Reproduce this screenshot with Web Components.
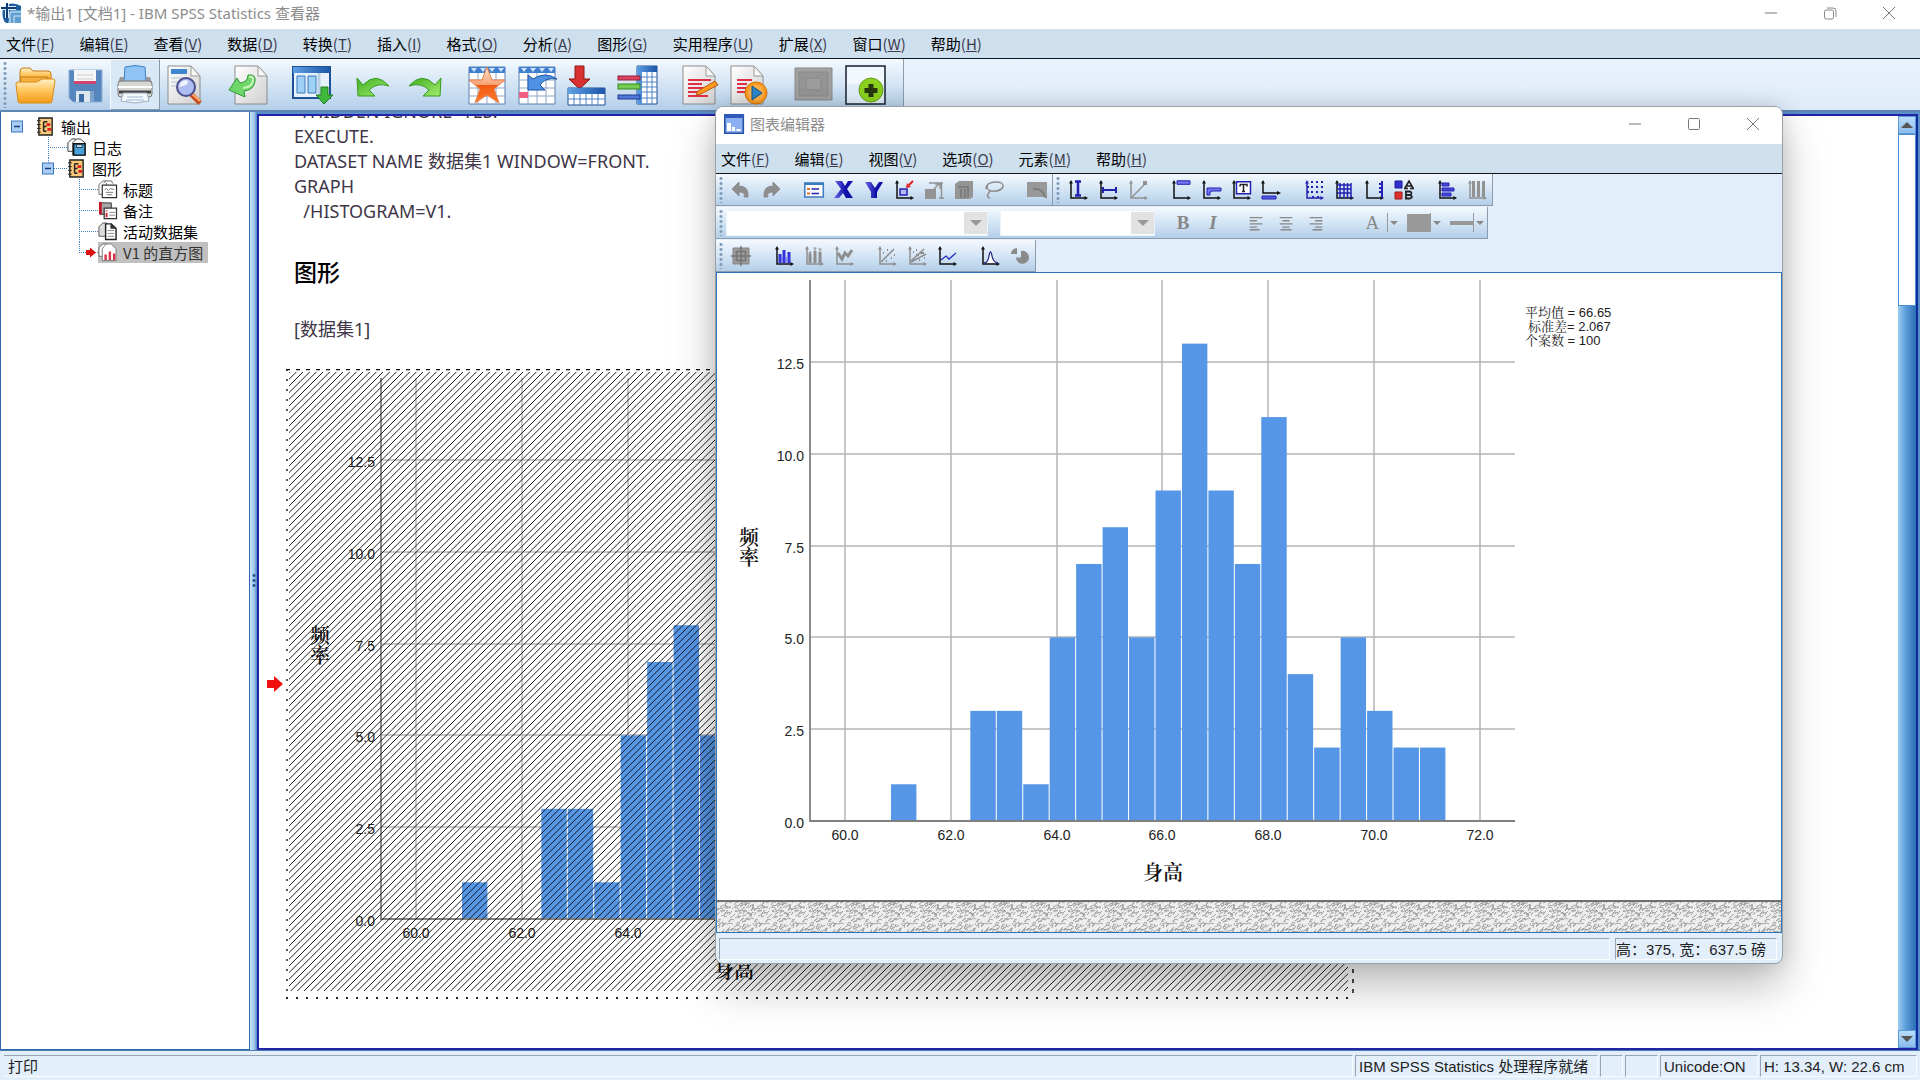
<!DOCTYPE html>
<html lang="zh-CN">
<head>
<meta charset="utf-8">
<title>*输出1 [文档1] - IBM SPSS Statistics 查看器</title>
<style>
html,body{margin:0;height:100%;overflow:hidden}
body{font-family:"Noto Sans CJK SC",sans-serif;font-size:15px;color:#000;background:#e2effb}
</style>
</head>
<body>
<spss-viewer></spss-viewer>
<script>
/* ---------- icon artwork ---------- */
const DEFS = `<defs>
<linearGradient id="or" x1="0" y1="0" x2="0" y2="1"><stop offset="0" stop-color="#fff2c8"/><stop offset=".5" stop-color="#ffc45a"/><stop offset="1" stop-color="#f39a16"/></linearGradient>
<linearGradient id="gn" x1="0" y1="0" x2="1" y2="1"><stop offset="0" stop-color="#3fae20"/><stop offset="1" stop-color="#a5ec70"/></linearGradient>
<linearGradient id="bl" x1="0" y1="0" x2="1" y2="0"><stop offset="0" stop-color="#5fa0e4"/><stop offset="1" stop-color="#1b55a8"/></linearGradient>
<linearGradient id="pg" x1="0" y1="0" x2="1" y2="1"><stop offset="0" stop-color="#fff"/><stop offset="1" stop-color="#cfcfcf"/></linearGradient>
<linearGradient id="st" x1="0" y1="0" x2="0" y2="1"><stop offset="0" stop-color="#ffe4d0"/><stop offset=".5" stop-color="#f8a070"/><stop offset=".51" stop-color="#f05a10"/><stop offset="1" stop-color="#ff7a30"/></linearGradient>
<linearGradient id="in" x1="0" y1="0" x2="1" y2="0"><stop offset="0" stop-color="#6c6ce8"/><stop offset=".6" stop-color="#1010a8"/></linearGradient></defs>`;
const PAGE = '<path d="M3 1h23l9 10v28H3z" fill="url(#pg)" stroke="#8c8c8c"/><path d="M26 1v10h9z" fill="#f8f8f8" stroke="#999"/>';
const GRID = '<path d="M2 2h36v37H2z" fill="#fff" stroke="#5b7fae"/><path d="M2 2h36v6H2z" fill="#3f7fd0"/><path d="M4 3l3 4 3-4M13 3l3 4 3-4M22 3l3 4 3-4M31 3l3 4 3-4" fill="#cfe4fb"/><path d="M2 15h36M2 23h36M2 31h36M11 8v31M20 8v31M29 8v31" stroke="#8ea4c4" fill="none"/>';
const AX = (c='#111') => `<path d="M3 2v16h15" fill="none" stroke="${c}" stroke-width="1.5"/><path d="M1 3.500L3 0l2 3.500zM16.500 16L20 18l-3.500 2z" fill="${c}"/>`;
const ICONS = {
open:'<path d="M5 7q0-4 3-4h7l3 3h15q3 0 3 3v8H5z" fill="url(#or)" stroke="#c67a10"/><path d="M4 34l2-22h27v22z" fill="#f5b040" stroke="#c67a10"/><path d="M1 19q0-2 2-2h19l5-3h11q2 0 2 2l-3 20q0 2-2 2H5q-2 0-2-2z" fill="url(#or)" stroke="#d98b18"/>',
save:'<path d="M4 5h33v32H8l-4-4z" fill="#5686bd" stroke="#8eb0d8"/><path d="M9 5h22v14H9z" fill="#f6f6f8"/><path d="M12 10h16M12 14h16" stroke="#ccc"/><path d="M9 16h22v3H9z" fill="#d2456a"/><path d="M11 26h17v11H11z" fill="#dde5ee"/><path d="M14 29h5v8h-5z" fill="#3c6ca6"/><path d="M25 26h4v11h-4z" fill="#7da2cc"/>',
print:'<path d="M10 2q10-3 20 0l1 15H9z" fill="#8fc4f4" stroke="#3c80c8"/><path d="M5 12h4v6h22v-6h4l2 6H3z" fill="#9a9a9a"/><rect x="3" y="16" width="34" height="16" rx="3" fill="#d6d6d2" stroke="#777"/><path d="M3 22h34" stroke="#fff" stroke-width="2"/><path d="M4 27h32" stroke="#444" stroke-width="3"/><path d="M8 28h24l2 8-14 2-14-2z" fill="#f5f9fc" stroke="#9ab"/><path d="M12 32h16M11 35h18" stroke="#9cb8d8"/>',
preview:PAGE+'<path d="M6 4h16v5H6z" fill="#3f86cf"/><path d="M6 13h14M6 17h6M6 21h5" stroke="#b8c4d4"/><path d="M26 29l9 9" stroke="#c8481c" stroke-width="5"/><path d="M26 28l9 8" stroke="#ffb070" stroke-width="2"/><circle cx="21" cy="22" r="9" fill="#aebcf0" stroke="#4a4f8c" stroke-width="2"/><path d="M14 22q1-7 8-7 4 5-8 7z" fill="#eef2ff"/>',
export:'<g transform="translate(4)">'+PAGE+'</g><path d="M20 10q8-1 7 6-1 9-11 10l1 6L1 25l8-12 3 5q8-1 8-8z" fill="#70d66a" stroke="#2c9a34"/><path d="M21 12q5-1 4 4-1 6-10 7" fill="none" stroke="#c8f6bc" stroke-width="2"/>',
goto:'<path d="M2 2h37v31H2z" fill="#e8f2fc" stroke="#1e5296" stroke-width="2"/><path d="M2 2h37v6H2z" fill="url(#bl)"/><path d="M6 11h8v17H6zM17 11h8v17h-8z" fill="#9fd0f6" stroke="#3b78bd"/><path d="M28 8v24" stroke="#b8cfe8" stroke-width="3"/><path d="M30 22h7v8h5l-9 9-8-9h5z" fill="#3eb83a" stroke="#227a22"/>',
undo:'<path d="M3 13l1 18h17l-6-6q8-8 20-4Q22 6 9 20z" fill="url(#gn)" stroke="#379a22"/>',
redo:'<path d="M37 13l-1 18H19l6-6q-8-8-20-4Q18 6 31 20z" fill="url(#gn)" stroke="#379a22"/>',
star:GRID+'<path d="M20 2l5 13h13L27 24l5 14-12-8-12 8 5-14L2 15h13z" fill="url(#st)" stroke="#e8824c"/>',
case:GRID+'<path d="M2 27h9v6H2z" fill="#f06080"/><path d="M11 25V10l5 4q12-8 24 0-12-2-17 6l5 5z" fill="#4f92e4" stroke="#1c55a4"/>',
insert:'<path d="M8 1h9v13h6L12.500 24 2 14h6z" fill="#d93030" stroke="#8c1818"/><path d="M1 23h37v17H1z" fill="#fff" stroke="#1f4f94"/><path d="M1 23h37v6H1z" fill="url(#bl)"/><path d="M1 34h37M7 29v11M13 29v11M19 29v11M25 29v11M31 29v11" stroke="#4d83c8" fill="none"/>',
vars:'<path d="M20 1h20v38H20z" fill="#fff" stroke="#1f4f94"/><path d="M20 1h20v6H20zM20 7h5v32h-5z" fill="url(#bl)"/><path d="M25 12h15M25 17h15M25 22h15M25 27h15M25 33h15M30 7v32M35 7v32" stroke="#4d83c8" fill="none"/><rect x="1" y="11" width="22" height="4" fill="#e04060" stroke="#902038"/><rect x="1" y="19" width="22" height="5" fill="#74cc50" stroke="#358a20"/><rect x="1" y="30" width="22" height="4" fill="#5078d8" stroke="#203c90"/>',
script:PAGE+'<path d="M8 15h23M8 19h14M8 23h20M8 27h12M8 31h20" stroke="#e03048" stroke-width="2"/><path d="M18 26l17-10 3 4-17 9-5 1z" fill="#ff9820" stroke="#b85c08"/>',
runscript:'<g transform="translate(-2)">'+PAGE+'<path d="M9 15h15M9 19h10M9 23h12M9 27h9" stroke="#e03048" stroke-width="2"/><circle cx="28" cy="28" r="11" fill="#fb9a20" stroke="#d07408" stroke-width="1"/><circle cx="28" cy="28" r="8" fill="#f8b04c"/><path d="M24 21l10 7-10 7z" fill="#2f86c8" stroke="#145488"/></g>',
designate:'<path d="M2 3h37v32H2z" fill="#a2a2a2" stroke="#888"/><path d="M6 7h29v24H6z" fill="#959595" stroke="#8a8a8a"/><path d="M13 13h15v12H13z" fill="#9d9d9d" stroke="#888"/>',
add:'<g transform="translate(2)"><path d="M1 1h39v38H1z" fill="#e0eefa" stroke="#182030" stroke-width="1.500"/><path d="M2 2h37v17H2z" fill="#f2f8fd"/><circle cx="26" cy="25" r="12" fill="#8cd020" stroke="#68a018"/><path d="M23.500 19h5v4h4v5h-4v4h-5v-4h-4v-5h4z" fill="#283810"/></g>',
/* 20px set used by the chart editor */
undo2:'<path d="M1 9l7-7v4q10 0 9 11h-4q2-5-5-5v4z" fill="#8e8e8e" stroke="#8e8e8e"/>',
redo2:'<path d="M19 9l-7-7v4Q2 6 3 17h4q-2-5 5-5v4z" fill="#8e8e8e" stroke="#8e8e8e"/>',
props:'<path d="M.8 3h18.500v14H.8z" fill="#fff" stroke="#3a7ac0" stroke-width="1.500"/><path d="M1 3h18v2H1z" fill="#3a7ac0"/><path d="M3 8h3v2H3zM3 12.500h3v2H3z" fill="#e07030"/><path d="M7.500 9H15M7.500 13.500H15" stroke="#2222b0" stroke-width="1.500"/>',
x:'<path d="M1 1h7l3 5 3-5h5l-6 8 6 9h-7l-3-5-4 5H0l7-9z" fill="url(#in)"/>',
y:'<path d="M1 2h6l4 6 4-6h4l-6 10v6H7v-6z" fill="url(#in)"/>',
rescale:AX()+'<path d="M6 9h7v6H6z" fill="#b8b8f8" stroke="#2222b0" stroke-width="1.500"/><path d="M19 1l-4 4" stroke="#e02020" stroke-width="2"/><path d="M12 8l1-5 4 4z" fill="#e02020"/>',
scale2:'<path d="M1 9h11v10H1z" fill="#949494"/><path d="M5 3h14M17.500 3v16M8 11l7-7M11 4h5v5M15 18h5" stroke="#949494" stroke-width="1.500" fill="none"/>',
cube:'<path d="M1 4l4-3h14v16l-3 2H1z" fill="#949494"/><path d="M4 7h10v10M7 9v9M11 9v9" stroke="#777" fill="none" stroke-width="1.500"/>',
lasso:'<path d="M2 9Q2 2 12 2q8 0 7 5-3 5-12 4-6-2-3-6M6 11q-5 6 0 7" fill="none" stroke="#8e8e8e" stroke-width="1.500"/>',
excl:'<path d="M0 2h20v17l-3-2H0z" fill="#989898"/><path d="M6 9h4q6 1 8 8" fill="none" stroke="#7c7c7c" stroke-width="2"/>',
refx:AX()+'<path d="M7 1.500h6M7 15.500h6M10 1v15" stroke="#2222b0" stroke-width="2.500"/>',
refy:AX()+'<path d="M5 7v6M18 7v6M5 10h14" stroke="#2222b0" stroke-width="2"/>',
refeq:AX('#929292')+'<path d="M3 18L17 4" stroke="#929292" stroke-width="1.500"/><path d="M15 1h4v4h-4z" fill="#929292"/>',
title:AX()+'<path d="M6 .8h13v3.500H6z" fill="#7474f0" stroke="#2222b0"/>',
annot:AX()+'<path d="M6 8h14v3h-9l-2 1v3H6z" fill="#7474f0" stroke="#2222b0"/>',
textbox:AX()+'<path d="M5.500 1.800h14v12h-14z" fill="#fff" stroke="#2222b0" stroke-width="1.500"/><path d="M9 4.500h7v2M9 4.500v2M12.500 4.500v7M11 11.500h3" stroke="#222" stroke-width="1.500" fill="none"/>',
footnote:'<path d="M2 2v11h15" fill="none" stroke="#111" stroke-width="1.500"/><path d="M0 3.500L2 0l2 3.500zM16 11l4 2-4 2z" fill="#111"/><path d="M1 16h14v3H1z" fill="#5a5ae0" stroke="#2222b0"/>',
dots:AX('#2222b0')+'<path d="M7 2h2M12 2h2M17 2h2M7 7h2M12 7h2M17 7h2M7 12h2M12 12h2M17 12h2M3 7h2M3 12h2M8 17h2M13 17h2" stroke="#2222b0" stroke-width="2"/>',
grid:AX()+'<path d="M3 5h14M3 9h14M3 13h14M6 3v15M10 3v15M13.500 3v15M17 3v15" stroke="#2222b0" stroke-width="1.500"/>',
axis2:AX()+'<path d="M18 1v17M15 4h3M15 8h3M15 12h3" stroke="#2222b0" stroke-width="2"/>',
legend:'<path d="M1 1h7v7H1z" fill="#3030d0" stroke="#1a1a90"/><path d="M1 12h7v7H1z" fill="#e03030" stroke="#a01818"/><path d="M11 8l4-7 4 7M12.500 6h5M10 8.500h4M16 8.500h4" fill="none" stroke="#222" stroke-width="1.600"/><path d="M12 11v8M11 11.500h5q3 1.500 0 3.500h-4M16 15q4 2 0 3.500h-5" fill="none" stroke="#222" stroke-width="1.800"/>',
transpose:AX()+'<path d="M5 3h7v3H5zM5 8h12v3H5zM5 13h9v3H5z" fill="#4848e0" stroke="#2222b0"/>',
cols:AX('#929292')+'<path d="M5 1h3v16H5zM10 1h3v16h-3zM15 1h3v16h-3z" fill="#929292"/>',
bin:'<path d="M2 2h16v16H2z" fill="#9a9a9a" stroke="#858585"/><path d="M0 10h20M10 0v20M5.500 5.500h9v9h-9z" fill="none" stroke="#757575" stroke-width="1.500"/>',
bars:AX()+'<path d="M6 8v9M10 4v13M15 6v11" stroke="#3434d8" stroke-width="3"/><path d="M8 11v6M12 11v6" stroke="#7777f0" stroke-width="1.500"/>',
ebars:AX('#8e8e8e')+'<path d="M6 8v9M11 5v12M16 6v11" stroke="#8e8e8e" stroke-width="3"/><path d="M4.500 7h3M9.500 2h3M14.500 3h3M6 5v3M11 2v3M16 3v3" stroke="#8e8e8e"/>',
interp:AX('#8e8e8e')+'<path d="M4 7l4 6 3-6 3 3 4-6" fill="none" stroke="#8e8e8e" stroke-width="3"/>',
fit:AX('#8e8e8e')+'<path d="M4 16L17 3" stroke="#8e8e8e" stroke-width="1.500"/><path d="M6 7h1M10 4h1M9 15h1M14 12h1M17 9h1" stroke="#8e8e8e" stroke-width="2"/>',
fitg:AX('#8e8e8e')+'<path d="M4 15L17 3M4 16l15-8" stroke="#8e8e8e" stroke-width="1.500"/><path d="M6 6h1M9 4h1M9 9h3M13 7h4M12 14h1M17 12h1" stroke="#8e8e8e" stroke-width="2"/>',
line:AX()+'<path d="M4 14l5-4 3 3 7-6" fill="none" stroke="#2a2ac0" stroke-width="1.300"/>',
curve:AX()+'<path d="M4 17q4 0 5-7 1.500-8 3 0 1 6 6 7" fill="#fff" stroke="#2a2a90" stroke-width="1.300"/>',
pie:'<path d="M9 4v6.500h-5a6.500 6.500 0 1 0 5-6.500z" fill="#8a8a8a" transform="translate(2 1)"/><path d="M1 8a6 6 0 0 1 6-6v6z" fill="#8a8a8a"/>',
al:'<path d="M3 4h14M3 7.500h8M3 11h14M3 14.500h8M3 17.500h11" stroke="#888" stroke-width="1.500"/>',
ac:'<path d="M3 4h14M6 7.500h8M3 11h14M6 14.500h8M4 17.500h12" stroke="#888" stroke-width="1.500"/>',
ar:'<path d="M3 4h14M9 7.500h8M3 11h14M9 14.500h8M6 17.500h11" stroke="#888" stroke-width="1.500"/>',
swatch:'<path d="M0 1h24v18H0z" fill="#999"/>',
rule:'<path d="M0 10h24" stroke="#999" stroke-width="4"/>',
/* window icons */
app:'<path d="M2 5Q10-3 20 3v17H5Q0 16 2 5z" fill="#1e5c9c"/><path d="M9 7h11v13H7z" fill="#5f9ed0"/><path d="M2 5h13M6 1v14" stroke="#d6ecfa" stroke-width="4"/><path d="M0 5h15M6 0v15" stroke="#123a70" stroke-width="2"/><path d="M9 20V9h11M13 20v-7h7" fill="none" stroke="#d6ecfa" stroke-width="1"/>',
chartwin:'<path d="M.8.800h18.500v18.500H.8z" fill="#8db0f4" stroke="#2450a8" stroke-width="1.600"/><path d="M0 0h20v4H0z" fill="#2c5cb8"/><path d="M3 9h4v8H3zM8 13h3v4H8zM12.500 15h4v2h-4z" fill="#fff"/>',
min:'<path d="M4 10h12" stroke="#777"/>',
max:'<rect x="4.500" y="4.500" width="11" height="11" rx="1" fill="none" stroke="#777"/>',
restore:'<rect x="4.500" y="7" width="9" height="9" rx="1.500" fill="none" stroke="#888"/><path d="M7 5h6q3 0 3 3v6" fill="none" stroke="#888"/>',
close:'<path d="M4 4l12 12M16 4L4 16" stroke="#777"/>',
/* outline icons */
book:'<path d="M3 1h14v18H3z" fill="#f8c878" stroke="#222" stroke-width="1.500"/><path d="M1 4h4M1 8h4M1 12h4M1 16h4" stroke="#222"/><path d="M8 5v10M8 5h4M8 10h3M8 15h3" stroke="#222" stroke-width="1.500"/><path d="M11 8h4M12 13h4" stroke="#e02020" stroke-width="3"/>',
log:'<path d="M1 5l4-4h4v13H1z" fill="#fff" stroke="#333"/><path d="M6 5l4-4h4l5 4v13H6z" fill="#fff" stroke="#333"/><path d="M7 6h12v12H7z" fill="#4aa0d8" stroke="#111" stroke-width="1.500"/><path d="M10 7h6v3h-6z" fill="#c8e8f8" stroke="#234"/>',
titlepg:'<path d="M1 5l4-4h4v14H1z" fill="#fff" stroke="#666"/><path d="M6 3l3-2h5l2 3" fill="#fff" stroke="#666"/><path d="M4.500 5.500h15v13h-15z" fill="#fff" stroke="#333" stroke-width="1.300"/><path d="M7 10l2-1 2 2 2-2 4 1M8 13h8M9 15.500h6" stroke="#777" fill="none"/>',
notes:'<path d="M2 2h12v12H2z" fill="#a8a8a8" stroke="#333"/><path d="M1 1h3v13H1z" fill="#c01828"/><path d="M6.500 7.500h13v11h-13z" fill="#fff" stroke="#333" stroke-width="1.300"/><path d="M9 10v1M9 12.500V17" stroke="#d02030" stroke-width="2"/><path d="M12 12h6M12 15h6" stroke="#888"/>',
data:'<path d="M1 5l4-4h4v14H1z" fill="#ddd" stroke="#555"/><path d="M8 2h6l5 5v11.500H8z" fill="#fff" stroke="#222" stroke-width="1.500"/><path d="M13 2v5h6" fill="#333"/><path d="M10 9h7M10 12h7M10 15h7" stroke="#888"/>',
hist:'<path d="M1 5l4-4h4v13H1z" fill="#fff" stroke="#666"/><path d="M6 4l3-3h5l5 5v12.500H4.500V6z" fill="#fff" stroke="#777"/><path d="M8 18v-6M12.500 18V9M17 18v-7" stroke="#d83040" stroke-width="2.500"/>'
};

/* Registers a custom element whose shadow root is filled from view(el). */
function define(name, css, view, ready) {
  customElements.define(name, class extends HTMLElement {
    connectedCallback() {
      if (this.shadowRoot) return;
      const t = document.createElement('template');
      t.innerHTML = `<style>*{box-sizing:border-box}button{font:inherit;color:inherit;background:none;border:0;padding:0;margin:0}${css}</style>${view(this)}`;
      this.attachShadow({mode:'open'}).append(t.content.cloneNode(true));
      if (ready) ready(this);
    }
  });
}

define('ui-icon', ':host{display:block;flex:none}svg{display:block}', el => {
  const s = +(el.getAttribute('size') || 20), v = +(el.getAttribute('box') || s);
  return `<svg width="${s}" height="${s}" viewBox="0 0 ${v} ${v}" overflow="visible" aria-hidden="true">${DEFS}${ICONS[el.getAttribute('name')]}</svg>`;
});

define('window-title', `:host{display:flex;align-items:center;background:#fff;color:#8c8c8c}
  .t{flex:1;display:flex;align-items:center;gap:6px;line-height:24px;font-family:"Noto Sans","Noto Sans CJK SC",sans-serif;font-weight:400}
  button{width:59px;height:24px;display:grid;place-items:center}`,
  el => `<div class="t"><ui-icon name="${el.getAttribute('icon')}"></ui-icon><slot></slot></div>
  <button aria-label="最小化"><ui-icon name="min"></ui-icon></button>
  <button aria-label="最大化"><ui-icon name="${el.getAttribute('mid')}"></ui-icon></button>
  <button aria-label="关闭"><ui-icon name="close"></ui-icon></button>`);

define('menu-bar', `:host{display:flex;align-items:center;gap:25px;height:30px;padding-left:6px;background:#cee0ee;border-bottom:1px solid #10161c;font-size:15px;line-height:22px}
  button{white-space:nowrap}span{color:#3c3c50}`,
  el => el.getAttribute('items').split(' ').map(i => `<button>${i.slice(0,-1)}<span>(<u>${i.slice(-1)}</u>)</span></button>`).join(''));

/* A strip of tools; "|" in the list separates groups. */
define('tool-strip', `:host{display:flex;align-items:center;background:linear-gradient(#f4f9fe,#d4e5f5 50%,#b4cfe9);border-right:1px solid #8c9cac;border-bottom:1px solid #8c9cac;flex:none}
  .grip{width:4px;height:calc(100% - 4px);margin:0 3px;background:radial-gradient(circle,#7f9bb8 1px,transparent 2px) 0 0/4px 5px}
  button{display:grid;place-items:center;width:var(--tool,30px);height:100%}
  .gap{width:13px}.hot{background:#d8e8f6;border:1px solid;border-color:#f6faff #8a98a8 #8a98a8 #f6faff}`,
  el => {
    const s = el.getAttribute('size') || 20;
    return '<div class="grip"></div>' + (el.getAttribute('tools') || '').split(' ').filter(Boolean).map(n => n === '|' ? '<div class="gap"></div>' :
      `<button aria-label="${n}" ${n === el.getAttribute('hot') ? 'class="hot"' : ''}><ui-icon name="${n}" size="${s}"></ui-icon></button>`).join('') + '<slot></slot>';
  });

define('combo-box', `:host{display:flex;align-items:center;height:26px;background:#fff;border:1px solid #e8f2fb;flex:none}
  select{flex:1;height:100%;appearance:none;border:0;background:#fff;outline:0}
  i{width:23px;height:22px;background:#e2e2e2;display:grid;place-items:center}
  i::after{content:"";border:6px solid transparent;border-top-color:#999;border-bottom:0}`,
  el => `<select aria-label="${el.getAttribute('label')}" disabled></select><i></i>`);

define('format-tools', `:host{display:flex;align-items:center;height:100%;color:#888;font-family:"Liberation Serif",serif;font-size:19px;line-height:24px}
  combo-box:first-of-type{width:262px;margin-right:12px}combo-box:last-of-type{width:155px}
  button{width:30px;display:grid;place-items:center}.g{width:13px}.w{width:24px}
  .split{width:43px;display:flex;align-items:center;justify-content:flex-end;gap:2px}
  .split i{width:1px;height:19px;background:#999;margin-left:1px}.split b{border:4px solid transparent;border-top-color:#888;border-bottom:0}`,
  () => `<combo-box label="字体"></combo-box><combo-box label="大小"></combo-box><div class="g"></div>
  <button><b>B</b></button><button><b><em>I</em></b></button><div class="g"></div>
  ${['al','ac','ar'].map(n => `<button aria-label="${n}"><ui-icon name="${n}" size="18" box="20"></ui-icon></button>`).join('')}<div class="w"></div>
  <button class="split">A&nbsp;<i></i><b></b></button>
  <button class="split" aria-label="填充"><ui-icon name="swatch"></ui-icon><i></i><b></b></button>
  <button class="split" aria-label="线条"><ui-icon name="rule"></ui-icon><i></i><b></b></button>`);

/* One row of the outline: guide lines, icon, label. */
define('outline-row', `:host{display:flex;align-items:center;height:21px;line-height:21px;padding-left:calc(var(--level,0)*31px);white-space:nowrap}
  svg{flex:none;display:block}.b{display:flex;align-items:center;height:21px;gap:6px}
  :host([selected]) .b{background:#c0c0c0;padding-right:5px;color:#333}`,
  el => {
    const l = +el.getAttribute('level'); el.style.setProperty('--level', l);
    const last = el.hasAttribute('last'), exp = el.hasAttribute('open');
    let g = l ? `<path d="M16.500 0V${last ? 11 : 21}M16 10.500h19" stroke="#3f86cc" stroke-dasharray="1 1" fill="none"/>` : '';
    if (exp) g += '<rect x="10.500" y="5" width="11" height="11" fill="#a9cdf6" stroke="#3c74bc"/><path d="M13 10.500h6" stroke="#163c78" stroke-width="1.500"/>';
    if (el.hasAttribute('selected')) g += '<path d="M23 8h4V5.500l6 5-6 5V13h-4z" fill="#e01010"/>';
    return `<svg width="35" height="21">${g}</svg><div class="b"><ui-icon name="${el.getAttribute('icon')}" size="19" box="20"></ui-icon><slot></slot></div>`;
  });

define('outline-pane', ':host{display:block;background:#fff;border:1px solid #2f6cae;border-top:0;padding-top:4px;overflow:hidden}', () => `
  <outline-row level="0" icon="book" open>输出</outline-row>
  <outline-row level="1" icon="log">日志</outline-row>
  <outline-row level="1" icon="book" open last>图形</outline-row>
  <outline-row level="2" icon="titlepg">标题</outline-row>
  <outline-row level="2" icon="notes">备注</outline-row>
  <outline-row level="2" icon="data">活动数据集</outline-row>
  <outline-row level="2" icon="hist" last selected>V1 的直方图</outline-row>`);

/* Histogram of V1; the "marked" form is drawn with the selection hatching over it. */
define('histogram-chart', `:host{display:block;flex:none}svg{display:block}
  text{font:14px "Liberation Sans","Noto Serif CJK SC","Noto Sans CJK SC",sans-serif;fill:#222}.ttl{font:600 20px "Noto Serif CJK SC","Noto Sans CJK SC",serif;text-anchor:middle;fill:#111}
  .up{writing-mode:vertical-rl}.st{font-size:13px}`,
  el => {
    const marked = el.hasAttribute('marked');
    const n = [1,0,0,3,3,1,5,7,8,5,9,13,9,7,11,4,2,5,3,2,2], Z = 548, U = 36.72;
    let s = '';
    for (let k = 0; k < 7; k++) { const x = 128 + Math.round(105.8*k); s += `<path d="M${x} 7V${Z}" stroke="#b4b4b4" stroke-width="1.500"/><text x="${x}" y="567" text-anchor="middle">${(60+2*k).toFixed(1)}</text>`; }
    for (let k = 0; k < 6; k++) { const y = Z - Math.round(2.5*U*k); if (k) s += `<path d="M93 ${y}H798" stroke="#b4b4b4" stroke-width="1.500"/>`; s += `<text x="87" y="${y+7}" text-anchor="end">${(2.5*k).toFixed(1)}</text>`; }
    n.forEach((v,i) => { if (v) s += `<rect x="${174 + 26.45*i}" y="${Z - v*U}" width="25.400" height="${v*U}" fill="#5596e6"/>`; });
    s += `<path d="M93 7V${Z}H798" fill="none" stroke="#808080" stroke-width="1.800"/>
      <text class="ttl" x="446" y="607">身高</text><text class="ttl up" x="32" y="274">频率</text>
      <text class="st" x="808" y="44">平均值 = 66.65</text><text class="st" x="811" y="58">标准差= 2.067</text><text class="st" x="808" y="72">个案数 = 100</text>`;
    if (!marked) return `<svg width="1064" height="627" role="img" aria-label="直方图">${s}</svg>`;
    return `<svg width="1068" height="630" role="img" aria-label="V1 的直方图"><defs><pattern id="h" width="20" height="20" patternUnits="userSpaceOnUse">
      <path d="M-2 8.670L8.670-2M-2 15.330L15.330-2M-2 22L22-2M4.670 22L22 4.670M11.330 22L22 11.330" stroke="#111" stroke-width=".95"/></pattern></defs>
      <g transform="translate(2 2)">${s}</g><rect x="3" y="3" width="1059" height="619" fill="url(#h)"/>
      <path d="M0 .500H1068" stroke="#111" stroke-width="1.500" stroke-dasharray="4 6"/><path d="M0 629H1068" stroke="#222" stroke-width="2" stroke-dasharray="2 8"/>
      <path d="M1 0V629" stroke="#222" stroke-width="1.500" stroke-dasharray="2 8"/><path d="M1067 0V629" stroke="#111" stroke-width="1.500" stroke-dasharray="4 6"/></svg>`;
  });

define('output-document', `:host{display:block;background:#fff;overflow:hidden;min-width:0}
  .in{padding-bottom:100px}
  pre,h2,p{margin:0 0 0 35px}
  pre,p{font:18px/25px "Noto Sans","Noto Sans CJK SC",sans-serif;font-weight:400;color:#403648;white-space:pre}
  h2{font-size:23px;line-height:32px;font-weight:500;margin-top:31px}
  p{margin-top:30px}
  .fig{display:flex;align-items:center;gap:3px;padding-left:8px;margin-top:27px}`,
  () => `<div class="in"><pre>  /HIDDEN IGNORE=YES.
EXECUTE.
DATASET NAME 数据集1 WINDOW=FRONT.
GRAPH
  /HISTOGRAM=V1.</pre><h2>图形</h2><p>[数据集1]</p>
  <div class="fig"><svg width="16" height="18"><path d="M0 5h7V1l9 8-9 8v-4H0z" fill="#f01010"/></svg><histogram-chart marked></histogram-chart></div></div>`,
  el => { el.scrollTop = 17; });

define('scroll-bar', `:host{display:flex;flex-direction:column;width:18px;flex:none;background:linear-gradient(90deg,#9cccf2,#5fa2dc 40%,#2c6cb4)}
  button{height:18px;background:linear-gradient(#b8dcfb,#8cbcec);border:1px solid #5b9ad4;display:grid;place-items:center}
  i{border:6px solid transparent}.u{border-bottom-color:#555;border-top:0}.d{border-top-color:#555;border-bottom:0}
  .thumb{height:172px;background:#fff;border:1px solid #4a90d0}.rest{flex:1}`,
  () => '<button aria-label="上"><i class="u"></i></button><div class="thumb"></div><div class="rest"></div><button aria-label="下"><i class="d"></i></button>');

define('status-cell', `:host{display:flex;align-items:center;height:22px;border:1px solid;border-color:#98a4b0 #f8fcff #f8fcff #98a4b0;padding:1px 3px 0;white-space:nowrap;font:15px/20px "Liberation Sans","Noto Sans CJK SC",sans-serif;color:#222;box-sizing:border-box}`, () => '<slot></slot>');

define('marble-strip', ':host{display:block;background:#eee;border-top:2px solid #707070;height:32px}svg{display:block;width:100%;height:100%}', () => {
  let r = 7, d = ''; const rnd = m => (r = (r*16807) % 2147483647) % m;
  for (let i = 0; i < 170; i++) { const x = rnd(40), y = rnd(36); d += `M${x} ${y}l${1+rnd(4)} ${-1-rnd(3)}${i%4 ? '' : 'l2 1'}`; }
  return `<svg><defs><pattern id="m" width="37" height="36" patternUnits="userSpaceOnUse"><path d="${d}" fill="none" stroke="#a4a4a4" stroke-width="1"/></pattern></defs><rect width="100%" height="100%" fill="url(#m)"/></svg>`;
});

define('chart-editor', `:host{display:flex;flex-direction:column;background:#e2effb;border:1px solid #98a0a8;border-radius:8px;overflow:hidden;box-shadow:0 22px 44px rgba(0,0,0,.26),0 0 20px rgba(0,0,0,.12)}
  window-title{height:37px;padding:0 0 3px 8px;box-sizing:border-box}
  menu-bar{padding-left:5px}
  .row{display:flex;height:33px}.row:nth-of-type(3){height:32px}tool-strip{height:32px}
  .narrow{padding-right:3px}
  .canvas{background:#fff;border:1px solid #2f74b4}
  .st{display:flex;gap:5px;height:30px;padding:5px 5px 0 3px;box-sizing:border-box}.st :first-child{flex:1}
  .st :last-child{width:162px;padding:1px 0 0}`,
  () => `<window-title icon="chartwin" mid="max">图表编辑器</window-title>
  <menu-bar items="文件F 编辑E 视图V 选项O 元素M 帮助H"></menu-bar>
  <div class="row"><tool-strip tools="undo2 redo2 | props x y rescale scale2 cube lasso | excl"></tool-strip>
  <tool-strip tools="refx refy refeq | title annot textbox footnote | dots grid axis2 legend | transpose cols"></tool-strip></div>
  <div class="row"><tool-strip class="narrow"><format-tools></format-tools></tool-strip></div>
  <div class="row"><tool-strip tools="bin | bars ebars interp | fit fitg line | curve pie"></tool-strip></div>
  <div class="canvas"><histogram-chart></histogram-chart><marble-strip></marble-strip></div>
  <div class="st"><status-cell></status-cell><status-cell>高：375, 宽：637.5 磅</status-cell></div>`);

define('spss-viewer', `:host{display:grid;grid-template-rows:29px 30px 53px 1fr 29px;height:100vh}
  window-title{padding:0 2px 3px 1px}
  .tools{display:flex;border-bottom:2px solid #5e86b4;background:linear-gradient(#e9f3fc,#dfecf9)}
  tool-strip{--tool:50px;padding-right:15px;border-bottom:0}
  main{display:grid;grid-template-columns:250px 7px minmax(0,1fr);min-height:0;padding-right:2px;background:#5a8fc8;border-bottom:1px solid #4a7ab0}
  .split{background:linear-gradient(90deg,#cfe4f8,#9cc8f0 60%,#4f86c4);display:grid;place-items:center}
  .split i{width:4px;height:16px;background:radial-gradient(circle,#24588c 1px,transparent 2px) 0 0/4px 5px}
  .out{display:flex;border:2px solid;border-color:#2424a8 #0c2ca0 #2424a8 #2424a8;margin-top:2px;min-height:0}
  output-document{flex:1}
  footer{display:flex;align-items:flex-start;gap:2px;padding:3px 3px 0 4px;background:#e2effb;border-top:1px solid #e2effb}
  footer :nth-child(1){flex:1;border-left:0;padding-left:4px}footer :nth-child(2){width:243px}footer :nth-child(3){width:23px}footer :nth-child(4){width:33px}footer :nth-child(5){width:98px}footer :nth-child(6){width:157px}
  chart-editor{position:absolute;left:715px;top:106px;width:1068px}`,
  () => `<window-title icon="app" mid="restore">*输出1 [文档1] - IBM SPSS Statistics 查看器</window-title>
  <menu-bar items="文件F 编辑E 查看V 数据D 转换T 插入I 格式O 分析A 图形G 实用程序U 扩展X 窗口W 帮助H"></menu-bar>
  <div class="tools"><tool-strip size="40" hot="print" tools="open save print preview | export | goto | undo redo | star case insert vars | script runscript | designate add"></tool-strip></div>
  <main><outline-pane></outline-pane><div class="split"><i></i></div>
  <div class="out"><output-document></output-document><scroll-bar></scroll-bar></div></main>
  <footer><status-cell>打印</status-cell><status-cell>IBM SPSS Statistics 处理程序就绪</status-cell><status-cell></status-cell><status-cell></status-cell><status-cell>Unicode:ON</status-cell><status-cell>H: 13.34, W: 22.6 cm</status-cell></footer>
  <chart-editor></chart-editor>`);
</script>
</body>
</html>
